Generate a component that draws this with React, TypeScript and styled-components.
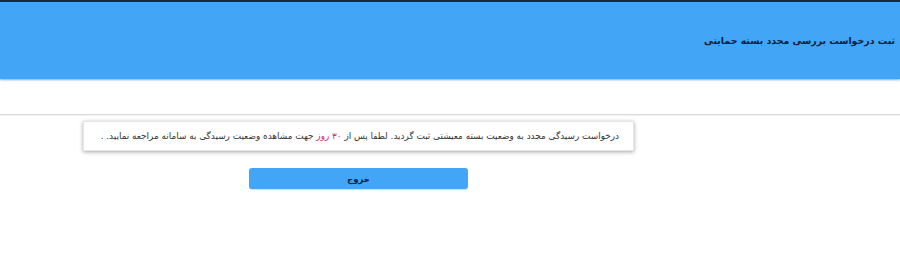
import React from 'react'
import styled, {createGlobalStyle} from 'styled-components'

const GlobalStyle = createGlobalStyle`
  html, body {
    margin: 0;
    padding: 0;
    background: #ffffff;
  }
  body {
    font-family: "DejaVu Sans", "Noto Sans", sans-serif;
    direction: rtl;
  }
`

const Page = styled.div`
  width: 900px;
  min-height: 272px;
  border-top: 2px solid #1d2a36;
`

const Header = styled.header`
  height: 77px;
  background: #42a5f5;
  display: flex;
  align-items: center;
  padding-right: 5px;
  box-shadow: 0 1px 2px rgba(0, 60, 120, 0.45);
`

const Title = styled.h1`
  margin: 0;
  padding-bottom: 1px;
  font-size: 9.4px;
  font-weight: bold;
  color: #14213d;
`

const Divider = styled.div`
  margin-top: 35px;
  height: 1px;
  background: #dcdcdc;
  box-shadow: 0 1px 0 #f0f0f0;
`

const Content = styled.main`
  width: 551px;
  margin-right: 266px;
  padding-top: 6px;
  display: flex;
  flex-direction: column;
  align-items: center;
  gap: 17px;
`

const Notice = styled.div`
  box-sizing: border-box;
  width: 100%;
  height: 30px;
  display: flex;
  align-items: center;
  padding: 0 14px;
  background: #ffffff;
  border: 1px solid #e6e6e6;
  box-shadow: 0 1px 4px rgba(0, 0, 0, 0.35);
  font-size: 8.9px;
  color: #333;
  white-space: nowrap;
`

const Highlight = styled.span`
  color: #c2306c;
`

const ExitButton = styled.button`
  width: 219px;
  height: 21px;
  border: none;
  border-radius: 3px;
  background: #42a5f5;
  color: #14213d;
  font-family: inherit;
  font-size: 8.5px;
  font-weight: bold;
  cursor: pointer;
  box-shadow: 0 1px 1px rgba(0, 0, 0, 0.15);
`

const App = () => {
  return (
    <Page>
      <GlobalStyle />
      <Header>
        <Title>ثبت درخواست بررسی مجدد بسته حمایتی</Title>
      </Header>
      <Divider />
      <Content>
        <Notice>
          درخواست رسیدگی مجدد به وضعیت بسته معیشتی ثبت گردید. لطفا پس از&nbsp;
          <Highlight>۳۰ روز</Highlight>
          &nbsp;جهت مشاهده وضعیت رسیدگی به سامانه مراجعه نمایید. .
        </Notice>
        <ExitButton>خروج</ExitButton>
      </Content>
    </Page>
  )
}

export default App
